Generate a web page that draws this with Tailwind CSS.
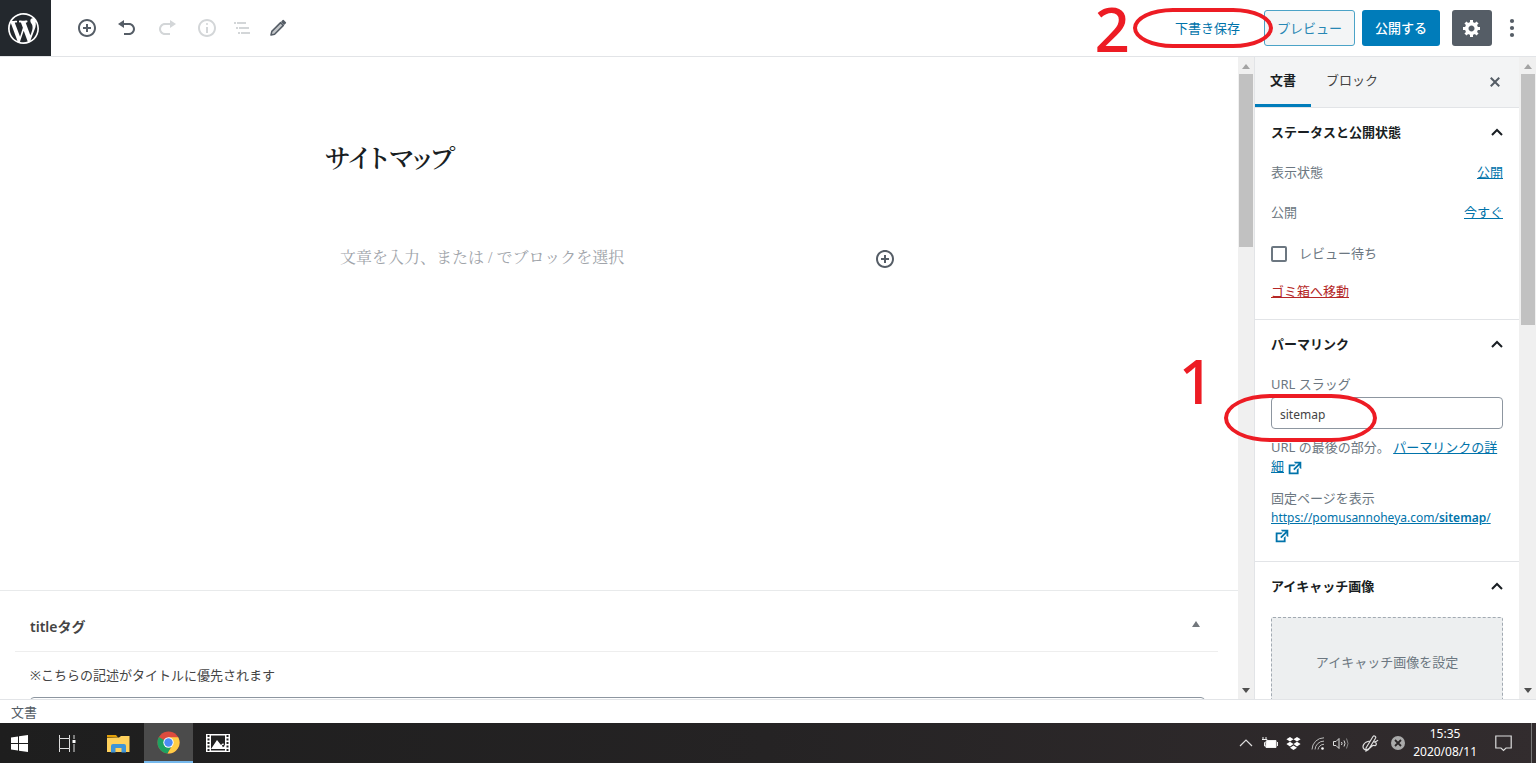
<!DOCTYPE html>
<html lang="ja">
<head>
    <meta charset="UTF-8">
    <meta name="viewport" content="width=device-width, initial-scale=1.0">
    <title>固定ページを編集</title>
    <script src="https://cdn.jsdelivr.net/npm/@tailwindcss/browser@4"></script>
</head>
<body class="relative flex h-screen flex-col overflow-hidden bg-white font-['Noto_Sans','Noto_Sans_CJK_JP',sans-serif] text-[13px] leading-[19px] text-[#555d66]">

    <!-- Editor toolbar -->
    <header class="flex h-[57px] shrink-0 items-center border-b border-[#e2e4e7] pr-[14px]">
        <a href="#" aria-label="WordPress" class="flex h-full w-[51px] items-center justify-center bg-[#23282d] text-white">
            <svg class="mr-1 size-[31px]" viewBox="0 0 20 20" fill="currentColor"><path d="M20 10c0-5.51-4.49-10-10-10C4.48 0 0 4.49 0 10c0 5.52 4.48 10 10 10 5.51 0 10-4.48 10-10zM7.78 15.37L4.37 6.22c.55-.02 1.17-.08 1.17-.08.5-.06.44-1.13-.06-1.11 0 0-1.45.11-2.37.11-.18 0-.37 0-.58-.01C4.12 2.69 6.87 1.11 10 1.11c2.33 0 4.45.87 6.05 2.34-.68-.11-1.65.39-1.65 1.58 0 .74.45 1.36.9 2.1.35.61.55 1.36.55 2.46 0 1.49-1.4 5-1.4 5l-3.03-8.37c.54-.02.82-.17.82-.17.5-.05.44-1.25-.06-1.22 0 0-1.44.12-2.38.12-.87 0-2.33-.12-2.33-.12-.5-.03-.56 1.2-.06 1.22l.92.08 1.26 3.41zM17.41 10c.24-.64.74-1.87.43-4.25.7 1.29 1.05 2.71 1.05 4.25 0 3.29-1.73 6.24-4.4 7.78.97-2.59 1.94-5.2 2.92-7.78zM6.1 18.09C3.12 16.65 1.11 13.53 1.11 10c0-1.3.23-2.48.72-3.59C3.25 10.3 4.67 14.2 6.1 18.09zm4.03-6.63l2.58 6.98c-.86.29-1.76.45-2.71.45-.79 0-1.57-.11-2.29-.33.81-2.38 1.62-4.74 2.42-7.1z"/></svg>
        </a>
        <div class="ml-[26px] flex items-center gap-5">
            <button aria-label="ブロックの追加"><svg class="size-5" viewBox="0 0 20 20" fill="currentColor"><path d="M10 1c-5 0-9 4-9 9s4 9 9 9 9-4 9-9-4-9-9-9zm0 16c-3.9 0-7-3.1-7-7s3.1-7 7-7 7 3.1 7 7-3.1 7-7 7zm1-11H9v3H6v2h3v3h2v-3h3V9h-3V6z"/></svg></button>
            <button aria-label="元に戻す"><svg class="size-5" viewBox="0 0 20 20" fill="currentColor"><path d="M12 5H7V2L1 6l6 4V7h5c2.2 0 4 1.8 4 4s-1.8 4-4 4H7v2h5c3.3 0 6-2.7 6-6s-2.7-6-6-6z"/></svg></button>
            <button aria-label="やり直す" class="text-[#d3d6d8]" disabled><svg class="size-5" viewBox="0 0 20 20" fill="currentColor"><path d="M8 5h5V2l6 4-6 4V7H8c-2.2 0-4 1.8-4 4s1.8 4 4 4h5v2H8c-3.3 0-6-2.7-6-6s2.7-6 6-6z"/></svg></button>
            <button aria-label="コンテンツ構造" class="text-[#d3d6d8]" disabled><svg class="size-5" viewBox="0 0 20 20" fill="currentColor"><path d="M9 15h2V9H9v6zm1-10c-.5 0-1 .5-1 1s.5 1 1 1 1-.5 1-1-.5-1-1-1zm0-4c-5 0-9 4-9 9s4 9 9 9 9-4 9-9-4-9-9-9zm0 16c-3.9 0-7-3.1-7-7s3.1-7 7-7 7 3.1 7 7-3.1 7-7 7z"/></svg></button>
        </div>
        <div class="ml-[15px] flex items-center gap-4">
            <button aria-label="ブロックナビゲーション" class="text-[#d3d6d8]" disabled><svg class="size-5" viewBox="0 0 20 20" fill="currentColor"><path d="M2 4h2v2H2zM5 4h9v2H5zM4 9h2v2H4zM7 9h10v2H7zM6 14h2v2H6zM9 14h9v2H9z"/></svg></button>
            <button aria-label="ツール"><svg class="size-5" viewBox="0 0 20 20" fill="none" stroke="currentColor" stroke-width="1.5" stroke-linejoin="round"><path d="M3 17l.8-3.6L12.6 4.6l2.8 2.8-8.800 8.800z" fill="#c3c6c9"/><path d="M14 3.8l1.200-1.200 2.200 2.200-1.200 1.200z" fill="currentColor"/></svg></button>
        </div>
        <div class="ml-auto flex items-center">
            <button class="mr-6 text-[#0073aa]">下書き保存</button>
            <button class="h-9 rounded-[3px] border border-[#4ba3c7] bg-[#f3f5f6] px-3 text-[#2787b4]">プレビュー</button>
            <button class="ml-[7px] h-9 rounded-[3px] bg-[#007cba] px-[13px] font-medium text-white">公開する</button>
            <button aria-label="設定" class="ml-3 flex h-9 w-10 items-center justify-center rounded-[3px] bg-[#555d66] text-white"><svg class="size-5" viewBox="0 0 20 20" fill="currentColor"><path d="M18 12h-2.18c-.17.7-.44 1.35-.81 1.93l1.54 1.54-2.1 2.1-1.54-1.54c-.58.36-1.23.63-1.91.79V19H8v-2.18c-.68-.16-1.33-.43-1.91-.79l-1.54 1.54-2.12-2.12 1.54-1.54c-.36-.58-.63-1.23-.79-1.91H1V9.03h2.17c.16-.7.44-1.35.8-1.94L2.43 5.55l2.1-2.1 1.54 1.54c.58-.37 1.24-.64 1.93-.81V2h3v2.18c.68.16 1.33.43 1.91.79l1.54-1.54 2.12 2.12-1.54 1.54c.36.59.64 1.24.8 1.94H18V12zm-8.5 1.5c1.66 0 3-1.34 3-3s-1.34-3-3-3-3 1.34-3 3 1.34 3 3 3z"/></svg></button>
            <button aria-label="その他" class="ml-[10px]"><svg class="size-5" viewBox="0 0 20 20" fill="currentColor"><circle cx="10" cy="3" r="2.1"/><circle cx="10" cy="10" r="2.1"/><circle cx="10" cy="17" r="2.1"/></svg></button>
        </div>
    </header>

    <div class="flex min-h-0 flex-1">
        <!-- Writing area -->
        <main class="flex min-w-0 flex-1 flex-col overflow-hidden">
            <div class="flex-1">
                <div class="mx-auto max-w-[588px] pt-[75px] font-['Liberation_Serif','Noto_Serif_CJK_JP','Noto_Sans_CJK_JP',serif]">
                    <input type="text" aria-label="タイトル" value="サイトマップ" class="block h-12 w-full text-[26px] font-semibold text-[#191e23] outline-none [font-feature-settings:'palt']">
                    <div class="mt-[64px] flex items-center pr-[18px] pl-[15px]">
                        <textarea rows="1" aria-label="本文" placeholder="文章を入力、または / でブロックを選択" class="h-7 flex-1 resize-none overflow-hidden text-[16px] leading-7 outline-none placeholder:text-[#a0a4aa]"></textarea>
                        <button aria-label="ブロックの追加" class="pt-[2px]"><svg class="size-5" viewBox="0 0 20 20" fill="currentColor"><path d="M10 1c-5 0-9 4-9 9s4 9 9 9 9-4 9-9-4-9-9-9zm0 16c-3.9 0-7-3.1-7-7s3.1-7 7-7 7 3.1 7 7-3.1 7-7 7zm1-11H9v3H6v2h3v3h2v-3h3V9h-3V6z"/></svg></button>
                    </div>
                </div>
            </div>
            <section class="h-[109px] shrink-0 overflow-hidden border-t border-[#e8eaeb] pr-5 pl-[15px] text-[#444]">
                <div class="flex h-[61px] items-center justify-between border-b border-[#eee] pt-[10px] pr-[18px] pl-[15px]">
                    <h2 class="text-[14px] font-semibold">titleタグ</h2>
                    <button aria-label="パネルを切り替え" class="pb-1"><svg class="h-[6px] w-2" viewBox="0 0 8 6"><path d="M4 0l4 6H0z" fill="#72777c"/></svg></button>
                </div>
                <div class="pt-[14px] pr-[13px] pl-[15px]">
                    <label for="title-tag" class="block">※こちらの記述がタイトルに優先されます</label>
                    <input id="title-tag" type="text" class="mt-3 h-8 w-full rounded border border-[#8d96a0]">
                </div>
            </section>
        </main>
        <div class="flex w-4 shrink-0 flex-col items-center bg-[#f0f0f0] pt-[7px] pb-[6px]">
            <svg class="h-[5px] w-2 shrink-0" viewBox="0 0 8 5"><path d="M4 0l4 5H0z" fill="#a3a3a3"/></svg>
            <div class="mt-[5px] h-[173px] w-[14px] bg-[#c1c1c1]"></div>
            <svg class="mt-auto h-[5px] w-2 shrink-0" viewBox="0 0 8 5"><path d="M0 0h8L4 5z" fill="#505050"/></svg>
        </div>

        <!-- Settings sidebar -->
        <aside class="w-[265px] shrink-0 overflow-hidden border-l border-[#e2e4e7] text-[#6c7781]">
            <div class="flex h-[51px] items-stretch border-b border-[#e2e4e7] bg-[#f3f4f5] pr-[14px]">
                <button class="border-b-3 border-[#007cba] px-[15px] font-semibold text-[#191e23]">文書</button>
                <button class="border-b-3 border-transparent px-[15px] text-[#444]">ブロック</button>
                <button aria-label="設定を閉じる" class="ml-auto text-[#555d66]"><svg class="size-5" viewBox="0 0 20 20" fill="currentColor"><path d="M14.95 6.46L11.41 10l3.54 3.54-1.41 1.41L10 11.42l-3.53 3.53-1.42-1.42L8.58 10 5.05 6.47l1.42-1.42L10 8.58l3.54-3.53z"/></svg></button>
            </div>

            <section class="h-[212px] border-b border-[#e2e4e7] px-4">
                <button class="flex h-12 w-full items-center justify-between font-semibold text-[#191e23]">ステータスと公開状態
                    <svg class="h-3 w-3" viewBox="0 0 12 12" fill="none" stroke="currentColor" stroke-width="2"><path d="M1 9l5-5 5 5"/></svg>
                </button>
                <div class="mt-[7px] flex justify-between"><span>表示状態</span><a href="#" class="text-[#0073aa] underline">公開</a></div>
                <div class="mt-[21px] flex justify-between"><span>公開</span><a href="#" class="text-[#0073aa] underline">今すぐ</a></div>
                <div class="mt-[22px] flex items-center gap-3">
                    <input id="review" type="checkbox" class="size-4 appearance-none rounded-[2px] border-2 border-[#6c7781]">
                    <label for="review">レビュー待ち</label>
                </div>
                <a href="#" class="mt-[19px] block text-[#b52727] underline">ゴミ箱へ移動</a>
            </section>

            <section class="h-[242px] border-b border-[#e2e4e7] px-4">
                <button class="flex h-12 w-full items-center justify-between font-semibold text-[#191e23]">パーマリンク
                    <svg class="h-3 w-3" viewBox="0 0 12 12" fill="none" stroke="currentColor" stroke-width="2"><path d="M1 9l5-5 5 5"/></svg>
                </button>
                <label for="slug" class="mt-[7px] block">URL スラッグ</label>
                <input id="slug" type="text" value="sitemap" class="mt-[3px] block h-8 w-full rounded border border-[#8d96a0] px-2 pt-[2px] text-[12px] text-[#444]">
                <p class="mt-[9px]">URL の最後の部分。 <a href="#" class="text-[#0073aa] underline">パーマリンクの詳細<svg class="ml-[2px] inline size-[18px]" viewBox="0 0 20 20" fill="currentColor"><path d="M9 3h8v8l-2-1V6.92l-5.6 5.59-1.41-1.41L14.08 5H10zm3 12v-3l2-2v7H3V6h8L9 8H5v7h7z"/></svg></a></p>
                <p class="mt-3">固定ページを表示</p>
                <a href="#" class="block text-[12px] text-[#0073aa] underline">https://pomusannoheya.com/<b class="font-semibold">sitemap</b>/<svg class="ml-[2px] block size-[18px]" viewBox="0 0 20 20" fill="currentColor"><path d="M9 3h8v8l-2-1V6.92l-5.6 5.59-1.41-1.41L14.08 5H10zm3 12v-3l2-2v7H3V6h8L9 8H5v7h7z"/></svg></a>
            </section>

            <section class="px-4">
                <button class="flex h-12 w-full items-center justify-between font-semibold text-[#191e23]">アイキャッチ画像
                    <svg class="h-3 w-3" viewBox="0 0 12 12" fill="none" stroke="currentColor" stroke-width="2"><path d="M1 9l5-5 5 5"/></svg>
                </button>
                <button class="mt-[7px] h-[90px] w-full rounded-[2px] border border-dashed border-[#a2aab2] bg-[#edeff0]">アイキャッチ画像を設定</button>
            </section>
        </aside>
        <div class="flex w-[17px] shrink-0 flex-col items-center bg-[#f0f0f0] pt-[7px] pb-[6px]">
            <svg class="h-[5px] w-2 shrink-0" viewBox="0 0 8 5"><path d="M4 0l4 5H0z" fill="#a3a3a3"/></svg>
            <div class="mt-[5px] h-[251px] w-[14px] bg-[#c1c1c1]"></div>
            <svg class="mt-auto h-[5px] w-2 shrink-0" viewBox="0 0 8 5"><path d="M0 0h8L4 5z" fill="#505050"/></svg>
        </div>
    </div>

    <div class="flex h-6 shrink-0 items-center border-t border-[#e2e4e7] pt-[2px] pl-[11px]">文書</div>

    <!-- Windows taskbar -->
    <footer class="flex h-10 shrink-0 items-center bg-linear-to-r from-[#1e1e1e] via-[#252324] to-[#322c2e] text-white">
        <button aria-label="スタート" class="ml-[11px]"><svg class="size-[17px]" viewBox="0 0 17 17" fill="#fff"><path d="M0 2.5l7-1v6.500H0zM8 1.300L17 0v8H8zM0 9h7v6.500l-7-1zM8 9h9v8l-9-1.300z"/></svg></button>
        <button aria-label="タスクビュー" class="ml-[30px]"><svg class="h-[17px] w-[18px]" viewBox="0 0 18 17" fill="none" stroke="#ddd"><path d="M1.5 0v3.500h10V0M1.500 17v-3.500h10V17M1.500 3.500v10M11.500 3.500v10M16 0v4M16 9v8"/><path d="M16 5v3" stroke="#fff" stroke-width="3"/></svg></button>
        <button aria-label="エクスプローラー" class="ml-[31px]"><svg class="h-[19px] w-[23px]" viewBox="0 0 23 19"><path d="M0 1h9l2 2.500H0z" fill="#e3a008"/><path d="M0 4l12-.5L14 2h8.500v16H0z" fill="#ffd15c"/><path d="M4 18.500V12q0-2 2-2h11q2 0 2 2v6.500h-4.500V14h-6v4.500z" fill="#3f95d8"/></svg></button>
        <button aria-label="Chrome" class="ml-[14px] flex h-full w-[49px] items-center justify-center border-b-2 border-[#76b9ed] bg-[#4b4b4b]">
            <svg class="size-[23px]" viewBox="0 0 24 24"><circle cx="12" cy="12" r="11.500" fill="#dd4b3e"/><path d="M2 6.200A11.500 11.500 0 0 0 11 23.450l5-8.700-4-2.500z" fill="#1da261"/><path d="M12 6.500h10.100A11.500 11.500 0 0 1 11 23.450l5.500-9.400z" fill="#ffcd46"/><circle cx="12" cy="12" r="5.400" fill="#fff"/><circle cx="12" cy="12" r="4.400" fill="#4c8bf5"/></svg>
        </button>
        <button aria-label="ムービー編集" class="ml-[13px]"><svg class="h-[18px] w-6" viewBox="0 0 24 18"><path d="M0 0h24v18H0z" fill="#fff"/><path d="M5 1.500h14v15H5z" fill="#222"/><path d="M5 15l6-9 4 5 2-2 2 3v3z" fill="#fff"/><path d="M13 5l5 8M2.500 1v16M21.500 1v16" stroke="#222" stroke-width="2" stroke-dasharray="2 1.500"/></svg></button>

        <div class="ml-auto flex h-full items-center">
            <svg class="h-2 w-[14px]" viewBox="0 0 14 8" fill="none" stroke="#ddd" stroke-width="1.200"><path d="M1 7l6-6 6 6"/></svg>
            <svg class="ml-[9px] h-3 w-4" viewBox="0 0 16 12" fill="none" stroke="#eee"><path d="M1 0v2M4 0v2M0 2.500h5v2l-2.500 1V9H4"/><path d="M5 3.500h9v7H4V6z" fill="#fff"/><path d="M15.500 5v4"/></svg>
            <svg class="ml-2 h-[13px] w-[15px]" viewBox="0 0 15 13" fill="#fff"><path d="M4 0l3.500 2.300L4 4.600.4 2.300zM11 0l3.600 2.300L11 4.600 7.500 2.300zM4 4.800l3.500 2.300L4 9.400.4 7.100zM11 4.800l3.600 2.300L11 9.400 7.500 7.100zM7.500 8.500l3.500 2.200L7.500 13 4 10.700z"/></svg>
            <svg class="ml-[10px] h-[13px] w-[14px]" viewBox="0 0 14 13" fill="none" stroke="#bbb"><path d="M1 12.500A12 12 0 0 1 13 .8M4 12.500a9 9 0 0 1 9-8.400M7 12.500a6 6 0 0 1 6-5.200"/><circle cx="11.500" cy="11.500" r="1.300" fill="#fff" stroke="none"/></svg>
            <svg class="ml-2 h-[13px] w-[17px]" viewBox="0 0 17 13" fill="none" stroke="#ddd"><path d="M.5 4.500H3l3-3v10l-3-3H.5zM8.500 5q1 1.500 0 3M11 3.500q2 3 0 6"/><path d="M13.500 1.500q3 5 0 10" stroke="#888"/></svg>
            <svg class="ml-3 h-[18px] w-[17px]" viewBox="0 0 17 18" fill="none" stroke="#ddd" stroke-width="1.200"><path d="M4 14L11 2.500c1-1.500 3.500 0 2.500 1.800L6.500 15.500 4 17zM8 7C1 8 0 13 2 15s6-1 8-3 3 1 4-1-1-3-2-3 3 0 4-2"/></svg>
            <svg class="ml-3 size-[14px]" viewBox="0 0 14 14"><circle cx="7" cy="7" r="7" fill="#aaa"/><path d="M4 4l6 6M10 4l-6 6" stroke="#2b2728" stroke-width="1.800"/></svg>
            <div class="ml-2 text-center text-[12px] leading-[18px]"><div>15:35</div><div>2020/08/11</div></div>
            <button aria-label="通知" class="ml-[18px]"><svg class="h-[17px] w-[17px]" viewBox="0 0 17 17" fill="none" stroke="#ddd" stroke-width="1.200"><path d="M.8 1h15.400v12H11l-2.500 2.500L6 13H.8z"/></svg></button>
            <div class="mr-1 ml-[19px] h-full border-l border-[#777]"></div>
        </div>
    </footer>

    <!-- Step marks drawn over the editor -->
    <div class="pointer-events-none absolute top-0 right-[406px] text-[62px] leading-[56px] font-medium text-[#ed1c24]">2</div>
    <div class="pointer-events-none absolute top-[8px] right-[263px] h-10 w-[140px] rounded-[40px/20px] border-4 border-[#ed1c24]"></div>
    <div class="pointer-events-none absolute top-[352px] right-[322px] text-[62px] leading-[56px] font-medium text-[#ed1c24]">1</div>
    <div class="pointer-events-none absolute top-[394px] right-[159px] h-12 w-[153px] rounded-[46px/24px] border-4 border-[#ed1c24]"></div>
</body>
</html>
